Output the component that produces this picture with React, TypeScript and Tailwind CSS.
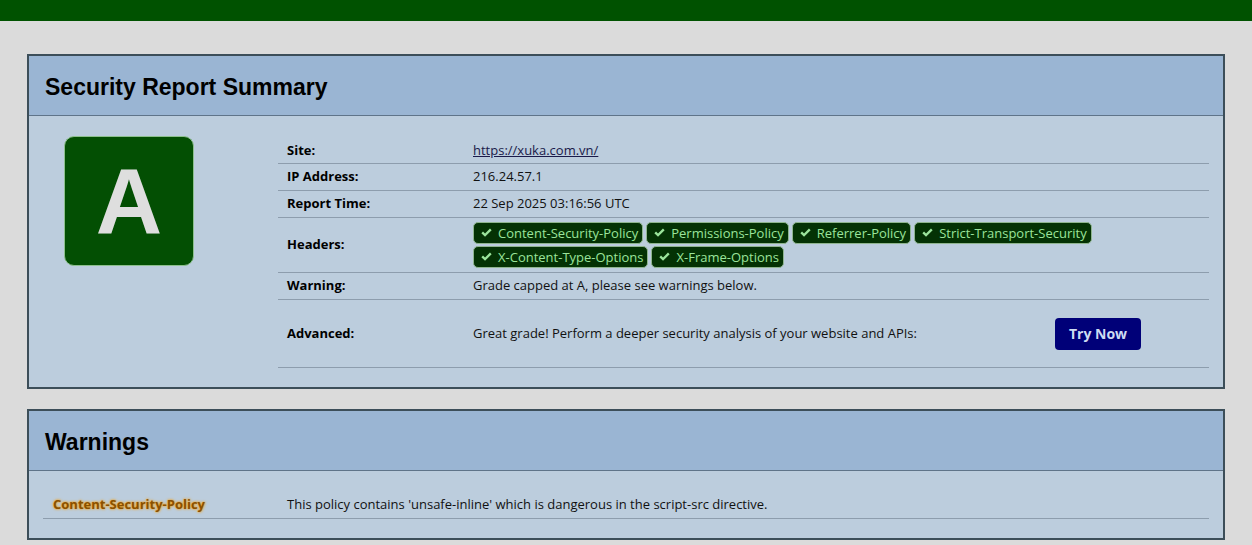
import React from "react";

const headers = [
  "Content-Security-Policy",
  "Permissions-Policy",
  "Referrer-Policy",
  "Strict-Transport-Security",
  "X-Content-Type-Options",
  "X-Frame-Options",
];

function Check() {
  return (
    <svg viewBox="0 0 12 10" className="w-[11px] h-[10px] shrink-0" fill="currentColor">
      <path d="M0.4 5.2 L2.2 3.4 L4.4 5.6 L9.8 0.2 L11.6 2 L4.4 9.2 Z" />
    </svg>
  );
}

function Badge({ label }: { label: string }) {
  return (
    <span className="inline-flex items-center gap-[6px] h-[22px] pl-[7px] pr-[4px] rounded-[5px] bg-[#043204] border border-[#8fb58f] text-[#9be49b] text-[13px] leading-none">
      <Check />
      {label}
    </span>
  );
}

function Row({
  label,
  children,
  className = "",
}: {
  label: string;
  children: React.ReactNode;
  className?: string;
}) {
  return (
    <div className={`flex items-center border-b border-[#8d9dad] ${className}`}>
      <div className="w-[195px] pl-[9px] font-bold text-[13px] text-black">{label}</div>
      <div className="flex-1 text-[13px] text-[#111]">{children}</div>
    </div>
  );
}

function Panel({ title, children }: { title: string; children: React.ReactNode }) {
  return (
    <section className="mx-[27px] border-2 border-[#3c4e59] bg-[#bccddd]">
      <div className="h-[60px] flex items-center pl-[16px] pt-[3px] bg-[#9ab5d3] border-b border-[#5f7489]">
        <h2 className="text-[23px] font-bold text-black" style={{ fontFamily: "'Liberation Sans', Arial, sans-serif" }}>
          {title}
        </h2>
      </div>
      {children}
    </section>
  );
}

export default function App() {
  return (
    <div
      className="min-h-[545px] bg-[#dbdbdb] pb-[5px]"
      style={{ fontFamily: "'Open Sans', 'Noto Sans', sans-serif" }}
    >
      <div className="h-[21px] bg-[#005200]" />
      <div className="pt-[33px] flex flex-col gap-[20px]">
        <Panel title="Security Report Summary">
          <div className="flex pt-[20px] pl-[35px] pr-[14px] pb-[19px]">
            <div className="w-[130px] h-[130px] shrink-0 rounded-[10px] bg-[#034f03] border border-[#8dc08d] flex items-center justify-center">
              <span
                className="text-[92px] font-bold text-[#dedede] leading-none"
                style={{ fontFamily: "'Liberation Sans', Arial, sans-serif" }}
              >
                A
              </span>
            </div>
            <div className="ml-[84px] mt-[2px] flex-1">
              <Row label="Site:" className="h-[26px]">
                <a className="underline text-[#1a1a4a]">https://xuka.com.vn/</a>
              </Row>
              <Row label="IP Address:" className="h-[27px]">216.24.57.1</Row>
              <Row label="Report Time:" className="h-[27px]">22 Sep 2025 03:16:56 UTC</Row>
              <Row label="Headers:" className="h-[55px]">
                <div className="flex flex-wrap gap-x-[3px] gap-y-[2px] pr-[100px]">
                  {headers.map((h) => (
                    <Badge key={h} label={h} />
                  ))}
                </div>
              </Row>
              <Row label="Warning:" className="h-[27px]">Grade capped at A, please see warnings below.</Row>
              <Row label="Advanced:" className="h-[68px]">
                <div className="flex items-center">
                  <span>Great grade! Perform a deeper security analysis of your website and APIs:</span>
                  <button className="ml-auto mr-[68px] w-[86px] h-[32px] rounded-[4px] bg-[#000078] text-[#cddcf2] text-[14px] font-bold">
                    Try Now
                  </button>
                </div>
              </Row>
            </div>
          </div>
        </Panel>
        <Panel title="Warnings">
          <div className="pt-[20px] pb-[19px] px-[14px]">
            <div className="flex items-center h-[28px] border-b border-[#8d9dad]">
              <div className="w-[244px] pl-[10px] text-[13px] font-bold text-[#8a5000] [text-shadow:0_0_3px_#f0a424,0_0_2px_#f0a424]">
                Content-Security-Policy
              </div>
              <div className="text-[13px] text-[#111]">
                This policy contains 'unsafe-inline' which is dangerous in the script-src directive.
              </div>
            </div>
          </div>
        </Panel>
      </div>
    </div>
  );
}
